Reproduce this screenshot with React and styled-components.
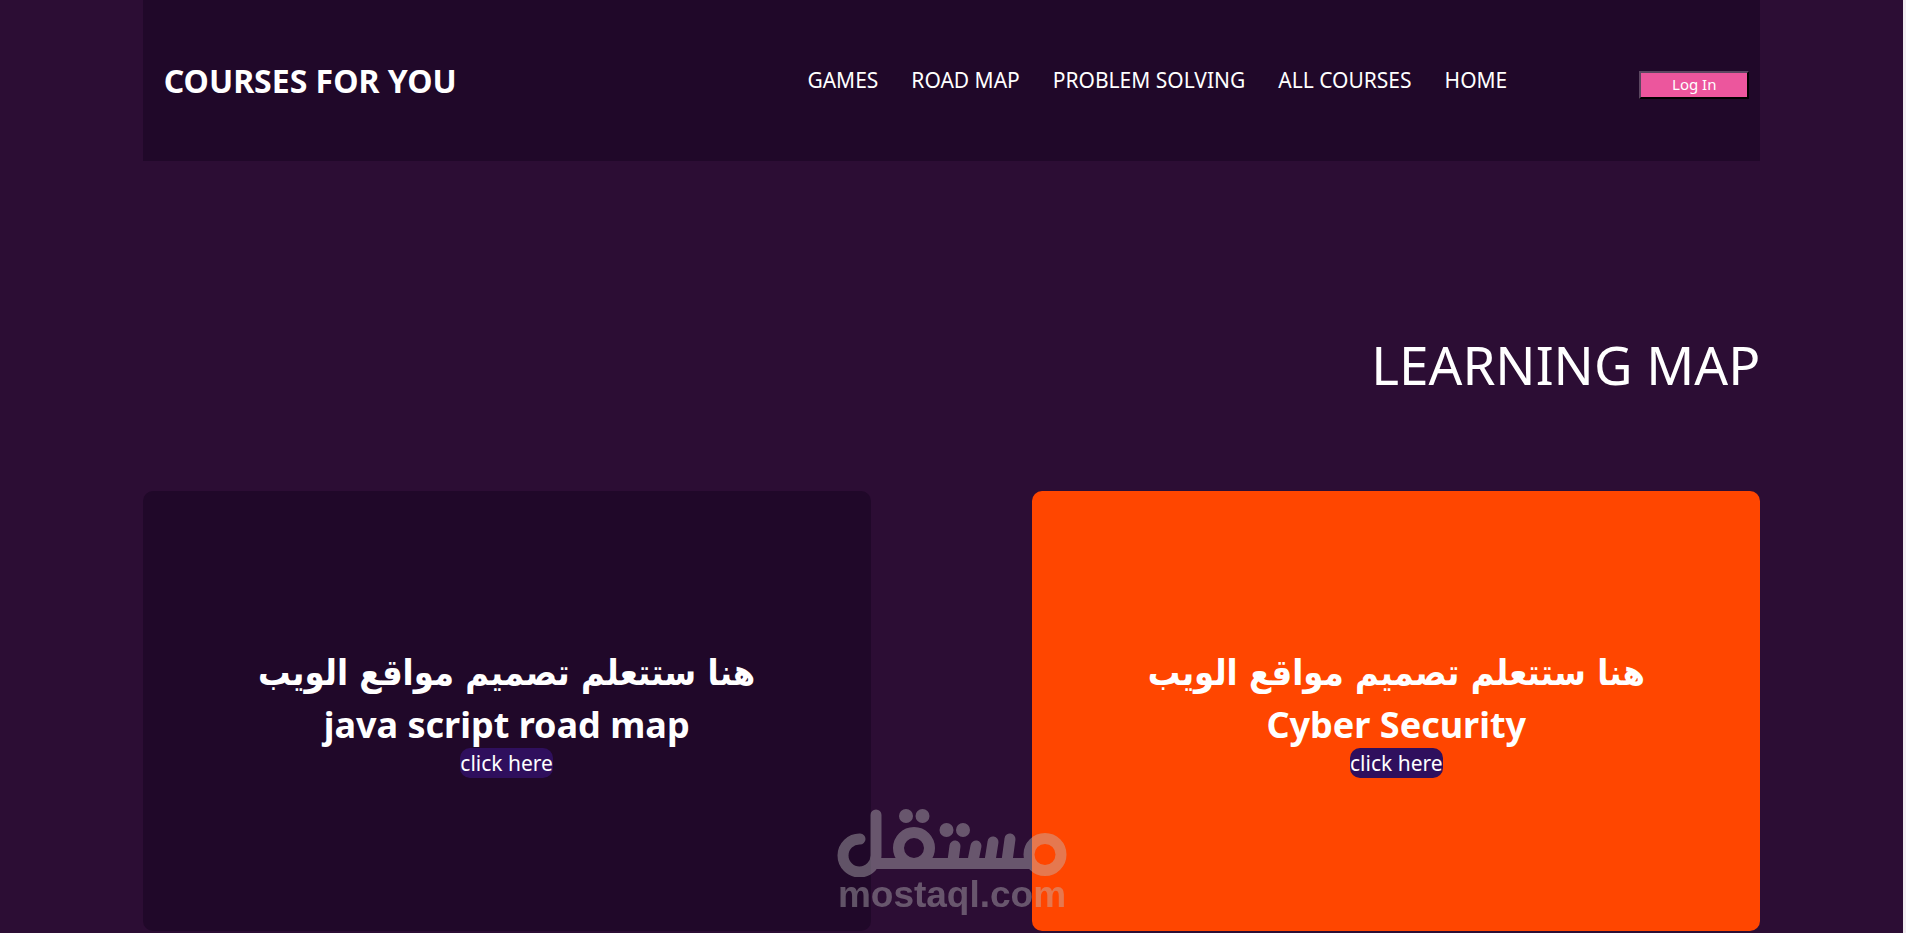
import React from 'react';
import styled, { createGlobalStyle } from 'styled-components';

const GlobalStyle = createGlobalStyle`
  * {
    box-sizing: border-box;
    margin: 0;
    padding: 0;
  }

  body {
    background-color: #2c0d34;
    color: #fff;
    font-family: 'Noto Sans', 'Open Sans', 'DejaVu Sans', sans-serif;
  }
`;

const Page = styled.div`
  min-height: 100vh;
  border-right: 3px solid #f1eff1;
`;

const Container = styled.div`
  width: 85%;
  margin: 0 auto;
`;

const Header = styled.header`
  display: flex;
  align-items: center;
  height: 161px;
  padding: 0 11px 0 21px;
  background-color: #200829;
`;

const Logo = styled.h2`
  margin-right: auto;
  font-size: 32px;
  line-height: 44px;
`;

const Nav = styled.nav`
  display: flex;
  gap: 33px;
  margin-right: 132px;
  padding-bottom: 2px;
`;

const NavLink = styled.a`
  color: #fff;
  font-size: 21px;
  line-height: 30px;
  text-decoration: none;
`;

const LoginButton = styled.button`
  width: 110px;
  height: 28px;
  margin-top: 8px;
  padding-bottom: 2px;
  border: 2px solid;
  border-color: #5b4660 #000 #000 #5b4660;
  background-color: #ec569d;
  color: #fff;
  font-family: inherit;
  font-size: 15px;
  line-height: 20px;
`;

const Title = styled.h1`
  margin: 164px 0 86px;
  font-size: 53px;
  font-weight: 400;
  line-height: 80px;
  text-align: right;
`;

const Cards = styled.main`
  display: flex;
  justify-content: space-between;
`;

const Card = styled.section`
  display: flex;
  flex-direction: column;
  align-items: center;
  justify-content: center;
  width: 45%;
  height: 440px;
  border-radius: 10px;
  background-color: ${({ $color }) => $color};
`;

const CardText = styled.h2`
  padding-top: 6px;
  font-size: 36px;
  line-height: 46px;
  text-align: center;
`;

const ArabicText = styled(CardText)`
  font-family: 'DejaVu Sans Condensed', 'DejaVu Sans', sans-serif;
`;

const CardLink = styled.a`
  border-radius: 10px;
  background-color: #2f0f5d;
  color: #fff;
  font-size: 21px;
  line-height: 30px;
  text-decoration: none;
`;

const Watermark = styled.div`
  position: fixed;
  bottom: 20px;
  left: 50%;
  width: 230px;
  margin-left: -116px;
  opacity: 0.41;
  color: #c0c0c0;
  text-align: center;
  pointer-events: none;

  svg {
    display: block;
  }
`;

const WatermarkName = styled.p`
  font-family: 'Liberation Sans', sans-serif;
  font-size: 37px;
  font-weight: 700;
  line-height: 36px;
`;

const links = ['GAMES', 'ROAD MAP', 'PROBLEM SOLVING', 'ALL COURSES', 'HOME'];

const cards = [
  { title: 'java script road map', color: '#200829' },
  { title: 'Cyber Security', color: '#ff4600' },
];

const MostaqlMark = () => (
  <svg width="230" height="68" viewBox="0 0 230 68" fill="none" stroke="currentColor" strokeLinecap="round" aria-hidden="true">
    <path d="M23 30A16.500 16.500 0 1 0 39 46V6" strokeWidth="11" />
    <path d="M36 54.500H197" strokeWidth="11" strokeLinecap="butt" />
    <circle cx="77" cy="39" r="15.500" strokeWidth="11" />
    <circle cx="208" cy="45.500" r="16" strokeWidth="11" />
    <path d="M118 37L116 52M139 37L136 52M156 33L153 52M173 30L170 52" strokeWidth="11" />
    <g fill="currentColor" stroke="none">
      <circle cx="69" cy="7" r="7" />
      <circle cx="85.500" cy="7" r="7" />
      <circle cx="109.500" cy="21" r="7" />
      <circle cx="126" cy="21" r="7" />
    </g>
  </svg>
);

const App = () => {
  return (
    <Page>
      <GlobalStyle />
      <Container>
        <Header>
          <Logo>COURSES FOR YOU</Logo>
          <Nav>
            {links.map((link) => (
              <NavLink href="#" key={link}>{link}</NavLink>
            ))}
          </Nav>
          <LoginButton type="button">Log In</LoginButton>
        </Header>
        <Title>LEARNING MAP</Title>
        <Cards>
          {cards.map(({ title, color }) => (
            <Card $color={color} key={title}>
              <ArabicText lang="ar" dir="rtl">هنا ستتعلم تصميم مواقع الويب</ArabicText>
              <CardText>{title}</CardText>
              <CardLink href="#">click here</CardLink>
            </Card>
          ))}
        </Cards>
      </Container>
      <Watermark>
        <MostaqlMark />
        <WatermarkName>mostaql.com</WatermarkName>
      </Watermark>
    </Page>
  );
};

export default App;
